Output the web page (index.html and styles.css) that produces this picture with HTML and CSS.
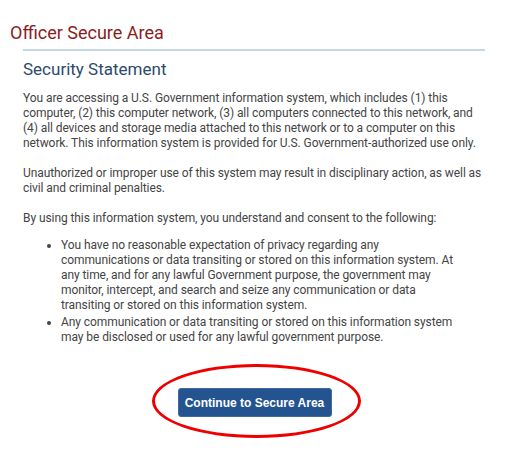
FILE: index.html
```html
<!DOCTYPE html>
<html>
<head>
<meta charset="utf-8">
<link rel="stylesheet" href="styles.css">
</head>
<body>
<h1 class="page-title">Officer Secure Area</h1>
<div class="panel">
  <h2 class="section-title">Security Statement</h2>
  <p class="para first">You are accessing a U.S. Government information system, which includes (1) this computer, (2) this computer network, (3) all computers connected to this network, and (4) all devices and storage media attached to this network or to a computer on this network. This information system is provided for U.S. Government-authorized use only.</p>
  <p class="para">Unauthorized or improper use of this system may result in disciplinary action, as well as civil and criminal penalties.</p>
  <p class="para">By using this information system, you understand and consent to the following:</p>
  <ul class="list">
    <li>You have no reasonable expectation of privacy regarding any communications or data transiting or stored on this information system. At any time, and for any lawful Government purpose, the government may monitor, intercept, and search and seize any communication or data transiting or stored on this information system.</li>
    <li>Any communication or data transiting or stored on this information system may be disclosed or used for any lawful government purpose.</li>
  </ul>
  <div class="actions">
    <div class="btn-wrap">
      <button class="btn">Continue to Secure Area</button>
      <span class="circle"></span>
    </div>
  </div>
</div>
</body>
</html>
```
FILE: styles.css
```css
html, body {
  margin: 0;
  padding: 0;
  background: #ffffff;
}
body {
  font-family: Roboto, "Liberation Sans", Arial, sans-serif;
  color: #444444;
  min-height: 462px;
}
.page-title {
  margin: 0;
  padding: 22px 0 0 10px;
  font-size: 18px;
  font-weight: 400;
  line-height: 22px;
  color: #8c1c1c;
}
.panel {
  margin: 5px 22px 0 23px;
  border-top: 2px solid #c3d7ea;
}
.section-title {
  margin: 0;
  padding-top: 8px;
  font-size: 17px;
  font-weight: 400;
  line-height: 20px;
  color: #2c4a6c;
}
.para {
  margin: 15px 0 0 0;
  font-size: 12px;
  line-height: 15px;
  letter-spacing: -0.08px;
}
.para.first {
  margin-top: 12px;
}
.list {
  margin: 12px 25px 0 0;
  padding-left: 38px;
  font-size: 12px;
  line-height: 15px;
  letter-spacing: -0.08px;
}
.list li {
  margin-bottom: 2px;
}
.actions {
  display: flex;
  justify-content: center;
  padding-top: 41px;
  padding-bottom: 50px;
  margin-left: -23px;
  margin-right: -22px;
}
.btn-wrap {
  position: relative;
  margin-left: 2px;
}
.btn {
  display: block;
  width: 154px;
  height: 29px;
  padding: 0;
  border: 1px solid #3f6aa0;
  border-radius: 3px;
  background: #23548f;
  color: #ffffff;
  font-family: "Liberation Sans", Arial, sans-serif;
  font-size: 12px;
  font-weight: 700;
}
.circle {
  position: absolute;
  box-sizing: border-box;
  left: -26px;
  top: -24px;
  width: 209px;
  height: 74px;
  border: 3px solid #ee0000;
  border-radius: 50%;
}
```
